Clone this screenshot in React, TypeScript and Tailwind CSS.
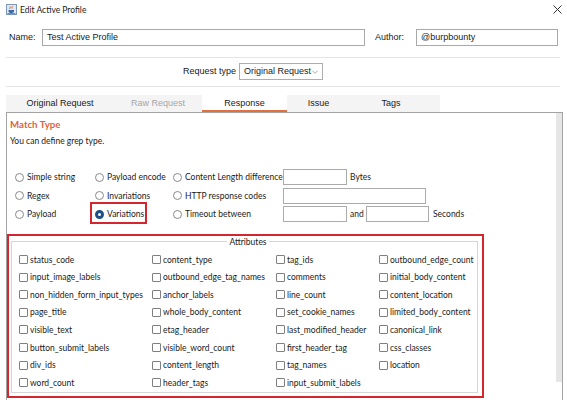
import React from "react";

const ui = "font-['Lato',sans-serif]";
const arial = "font-['Liberation_Sans',Arial,sans-serif]";

const attributes: string[][] = [
  ["status_code", "content_type", "tag_ids", "outbound_edge_count"],
  ["input_image_labels", "outbound_edge_tag_names", "comments", "initial_body_content"],
  ["non_hidden_form_input_types", "anchor_labels", "line_count", "content_location"],
  ["page_title", "whole_body_content", "set_cookie_names", "limited_body_content"],
  ["visible_text", "etag_header", "last_modified_header", "canonical_link"],
  ["button_submit_labels", "visible_word_count", "first_header_tag", "css_classes"],
  ["div_ids", "content_length", "tag_names", "location"],
  ["word_count", "header_tags", "input_submit_labels", ""],
];

const tabs = [
  { label: "Original Request", w: "w-[108px]", state: "" },
  { label: "Raw Request", w: "w-[88px]", state: "disabled" },
  { label: "Response", w: "w-[85px]", state: "active" },
  { label: "Issue", w: "w-[63px]", state: "" },
  { label: "Tags", w: "w-[82px]", state: "" },
];

function Radio({ checked = false }: { checked?: boolean }) {
  return checked ? (
    <span className="block w-[9px] h-[9px] rounded-full border-[3px] border-[#1d4f88] bg-white shrink-0" />
  ) : (
    <span className="block w-[9px] h-[9px] rounded-full border border-[#8a8a8a] bg-white shrink-0" />
  );
}

function RadioItem({ label, checked }: { label: string; checked?: boolean }) {
  return (
    <div className="flex items-center gap-[3px] whitespace-nowrap">
      <Radio checked={checked} />
      <span>{label}</span>
    </div>
  );
}

function Field({ w }: { w: string }) {
  return <div className={`${w} h-[16px] border border-[#ababab] bg-white shrink-0`} />;
}

export default function App() {
  return (
    <div className={`w-[567px] h-[400px] overflow-hidden bg-white text-[#1a1a1a] whitespace-nowrap ${arial}`}>
      {/* title bar */}
      <div className="h-[19px] flex items-center pl-[6px] pr-[5px]">
        <svg width="11" height="11" viewBox="0 0 11 11">
          <rect x="0.5" y="0.5" width="10" height="10" fill="#dfe9f5" stroke="#7d98b8" />
          <path d="M4 2.5c1 1-1 1.5 0 2.5M6 2c1 1-1 1.5 0 2.5" stroke="#d4562a" strokeWidth="0.9" fill="none" />
          <path d="M2.5 6h5.5v1.2c0 1-1 1.8-2.7 1.8S2.5 8.2 2.5 7.2z" fill="#3b6ea5" />
          <path d="M1.5 9.6h8" stroke="#3b6ea5" strokeWidth="0.8" />
        </svg>
        <span className={`ml-[3px] text-[8.5px] leading-[12px] ${ui}`}>Edit Active Profile</span>
        <svg className="ml-auto" width="9" height="9" viewBox="0 0 9 9">
          <path d="M0.5 0.5l8 8M8.5 0.5l-8 8" stroke="#333" strokeWidth="1" />
        </svg>
      </div>

      {/* name / author */}
      <div className="mt-[10px] h-[17px] flex items-center pl-[9px] text-[9px]">
        <span className="w-[33px]">Name:</span>
        <div className="w-[323px] h-[17px] border border-[#a9a9a9] flex items-center pl-[4px]">Test Active Profile</div>
        <span className="ml-[10px] w-[41px]">Author:</span>
        <div className="w-[142px] h-[17px] border border-[#a9a9a9] flex items-center pl-[4px]">@burpbounty</div>
      </div>

      <div className="mt-[11px] ml-[6px] w-[554px] h-px bg-[#e4e4e4]" />

      {/* request type */}
      <div className="mt-[5px] h-[17px] flex items-center pl-[183px] text-[9px]">
        <span>Request type</span>
        <div className="ml-[3px] w-[84px] h-[17px] border border-[#adadad] flex items-center pl-[4px] pr-[4px]">
          <span>Original Request</span>
          <svg className="ml-auto shrink-0" width="6" height="4" viewBox="0 0 6 4">
            <path d="M0.5 0.8l2.5 2.5 2.5-2.5" stroke="#808080" strokeWidth="0.7" fill="none" />
          </svg>
        </div>
      </div>

      <div className="mt-[6px] ml-[6px] w-[554px] h-px bg-[#e4e4e4]" />

      {/* tabs */}
      <div className="mt-[8px] ml-[6px] w-[434px] h-[17px] flex bg-[#f4f4f4] text-[9px]">
        {tabs.map((t) => (
          <div
            key={t.label}
            className={`${t.w} flex items-center justify-center ${
              t.state === "active"
                ? "bg-white border-b-2 border-[#e2703f] pt-[2px]"
                : t.state === "disabled"
                ? "text-[#a6a6a6]"
                : ""
            }`}
          >
            {t.label}
          </div>
        ))}
      </div>

      {/* panel */}
      <div className="ml-[6px] w-[557px] h-[288px] border-t border-l border-r border-[#a3a3a3] flex">
        <div className={`flex-1 pt-[5px] text-[8.5px] leading-[12px] ${ui}`}>
          <div className="pl-[3px] font-bold text-[#e0643a] text-[9.7px]">Match Type</div>
          <div className="pl-[3px] mt-[5px]">You can define grep type.</div>

          <div className="mt-[21px] ml-[8px]">
            <div className="flex items-center h-[18.6px]">
              <div className="w-[80px]"><RadioItem label="Simple string" /></div>
              <div className="w-[78px]"><RadioItem label="Payload encode" /></div>
              <div className="w-[110px]"><RadioItem label="Content Length difference" /></div>
              <Field w="w-[64px]" />
              <span className="ml-[3px]">Bytes</span>
            </div>
            <div className="flex items-center h-[18.6px]">
              <div className="w-[80px]"><RadioItem label="Regex" /></div>
              <div className="w-[78px]"><RadioItem label="Invariations" /></div>
              <div className="w-[110px]"><RadioItem label="HTTP response codes" /></div>
              <Field w="w-[143px]" />
            </div>
            <div className="flex items-center h-[18.6px]">
              <div className="w-[80px]"><RadioItem label="Payload" /></div>
              <div className="w-[78px] relative">
                <RadioItem label="Variations" checked />
                <div className="absolute -left-[5px] -top-[6px] w-[57px] h-[22px] border-2 border-[#d4262e]" />
              </div>
              <div className="w-[110px]"><RadioItem label="Timeout between" /></div>
              <Field w="w-[64px]" />
              <span className="ml-[3px] w-[16px]">and</span>
              <Field w="w-[63px]" />
              <span className="ml-[4px]">Seconds</span>
            </div>
          </div>

          {/* attributes */}
          <div className="mt-[10px] w-[477px] border-2 border-[#d4262e] pl-[2px] pr-[3px] pb-[3px]">
            <fieldset className="w-[467px] border border-[#d6d6d6] pl-[7px] pt-[3px]">
              <legend className="mx-auto px-[2px] leading-[12px]">Attributes</legend>
              <div className="grid grid-cols-[133px_124px_103px_1fr] auto-rows-[17.6px]">
                {attributes.flat().map((a, i) =>
                  a ? (
                    <div key={i} className="flex items-center gap-[2px]">
                      <span className="block w-[9px] h-[9px] border border-[#7f7f7f] rounded-[1px] bg-white shrink-0" />
                      <span>{a}</span>
                    </div>
                  ) : (
                    <div key={i} />
                  )
                )}
              </div>
            </fieldset>
          </div>
        </div>
        <div className="w-[6px] h-[269px] bg-[#e6e6e6]" />
      </div>
    </div>
  );
}
